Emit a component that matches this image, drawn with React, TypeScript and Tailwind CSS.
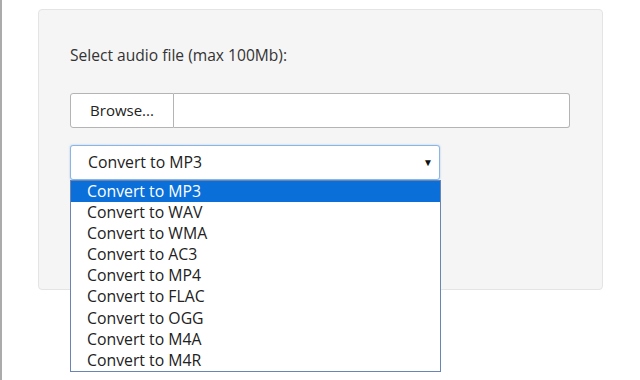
import React from "react";

const formats = ["MP3", "WAV", "WMA", "AC3", "MP4", "FLAC", "OGG", "M4A", "M4R"];

export default function App() {
  return (
    <div
      className="relative w-[640px] h-[380px] overflow-hidden bg-white border-l-2 border-[#ababab] text-[#222]"
      style={{ fontFamily: '"Open Sans", "Liberation Sans", sans-serif' }}
    >
      <div className="ml-[36px] mt-[9px] w-[565px] h-[281px] rounded-[4px] border border-[#e4e4e4] bg-[#f5f5f5] pt-[35px] pl-[31px] pr-[32px]">
        <p className="text-[15.6px] leading-[20px] text-[#333]">Select audio file (max 100Mb):</p>

        {/* file chooser */}
        <div className="flex mt-[28px] h-[35px]">
          <button className="w-[104px] h-full bg-white border border-[#b4b4b4] rounded-l-[3px] text-[15px] text-[#222]">
            Browse...
          </button>
          <div className="flex-1 h-full bg-white border border-l-0 border-[#b4b4b4] rounded-r-[3px]" />
        </div>

        {/* select + open list */}
        <div className="relative mt-[17px] w-[370px]">
          <div className="flex items-center justify-between h-[35px] bg-white border border-[#8ab6e6] rounded-[3px] shadow-[0_0_2px_rgba(80,150,230,0.5)] pl-[17px] pr-[6px] text-[15.8px]">
            <span>Convert to MP3</span>
            <span className="text-[10px] text-[#111]">▼</span>
          </div>
          <ul className="absolute left-0 top-[35px] w-[371px] bg-white border border-[#6b85b3]">
            {formats.map((f, i) => (
              <li
                key={f}
                className={
                  "h-[21.1px] pl-[16px] text-[15.8px] leading-[21px] " +
                  (i === 0 ? "bg-[#0a6fd8] text-white" : "text-[#222]")
                }
              >
                Convert to {f}
              </li>
            ))}
          </ul>
        </div>
      </div>
    </div>
  );
}
